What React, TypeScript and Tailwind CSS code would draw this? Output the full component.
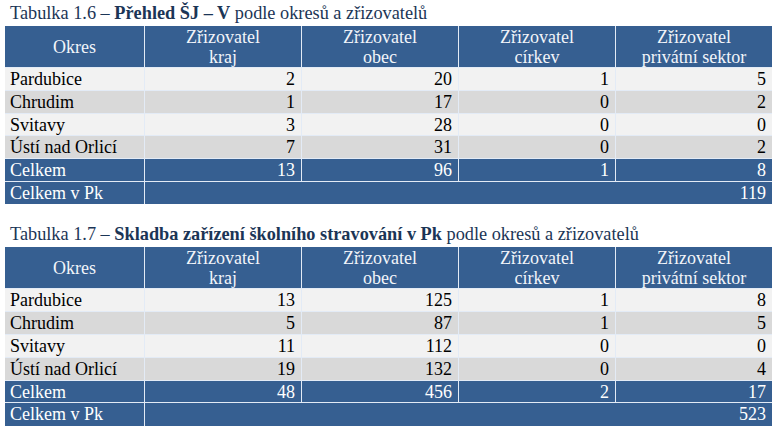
import React from "react";

type TRow = { okres: string; vals: number[] };

type TTableProps = {
  label: string;
  title: string;
  rows: TRow[];
  totals: number[];
  grand: number;
  className?: string;
};

const headers = [
  ["Zřizovatel", "kraj"],
  ["Zřizovatel", "obec"],
  ["Zřizovatel", "církev"],
  ["Zřizovatel", "privátní sektor"],
];

const Table = ({ label, title, rows, totals, grand, className }: TTableProps) => {
  return (
    <div className={className}>
      {/* TITLE */}
      <div className="h-[26px] leading-[26px] pl-[10px] text-[18.3px] text-[#1b3556] whitespace-nowrap">
        {label} – <span className="font-bold">{title}</span> podle okresů a zřizovatelů
      </div>

      {/* TABLE */}
      <div className="ml-[5px] w-[767px] grid grid-cols-[139px_156px_156px_156px_156px] gap-px bg-[#e3ebf6] text-[18px]">
        <div className="h-[41px] bg-[#365f91] text-[#f2f5fa] flex items-center justify-center leading-[20px]">
          Okres
        </div>
        {headers.map((h) => (
          <div
            key={h[1]}
            className="h-[41px] bg-[#365f91] text-[#f2f5fa] flex flex-col items-center justify-center leading-[20px]"
          >
            <span>{h[0]}</span>
            <span>{h[1]}</span>
          </div>
        ))}

        {rows.map((r, i) => {
          const bg = i % 2 === 0 ? "bg-[#f2f2f2]" : "bg-[#d9d9d9]";
          return (
            <React.Fragment key={r.okres}>
              <div className={`h-[21.8px] leading-[22px] pl-[5px] text-black ${bg}`}>
                {r.okres}
              </div>
              {r.vals.map((v, j) => (
                <div
                  key={j}
                  className={`h-[21.8px] leading-[22px] pr-[6px] text-right text-black ${bg}`}
                >
                  {v}
                </div>
              ))}
            </React.Fragment>
          );
        })}

        <div className="h-[21.8px] leading-[22px] pl-[5px] bg-[#365f91] text-white">
          Celkem
        </div>
        {totals.map((v, j) => (
          <div
            key={j}
            className="h-[21.8px] leading-[22px] pr-[6px] text-right bg-[#365f91] text-white"
          >
            {v}
          </div>
        ))}

        <div className="h-[22.5px] leading-[22px] pl-[5px] bg-[#365f91] text-white">
          Celkem v Pk
        </div>
        <div className="col-span-4 h-[22.5px] leading-[22px] pr-[6px] text-right bg-[#365f91] text-white">
          {grand}
        </div>
      </div>
    </div>
  );
};

export default function App() {
  return (
    <div className="w-[779px] h-[431px] bg-white overflow-hidden font-['Liberation_Serif','Times_New_Roman',serif]">
      <Table
        label="Tabulka 1.6"
        title="Přehled ŠJ – V"
        rows={[
          { okres: "Pardubice", vals: [2, 20, 1, 5] },
          { okres: "Chrudim", vals: [1, 17, 0, 2] },
          { okres: "Svitavy", vals: [3, 28, 0, 0] },
          { okres: "Ústí nad Orlicí", vals: [7, 31, 0, 2] },
        ]}
        totals={[13, 96, 1, 8]}
        grand={119}
      />
      <Table
        className="mt-[17px]"
        label="Tabulka 1.7"
        title="Skladba zařízení školního stravování v Pk"
        rows={[
          { okres: "Pardubice", vals: [13, 125, 1, 8] },
          { okres: "Chrudim", vals: [5, 87, 1, 5] },
          { okres: "Svitavy", vals: [11, 112, 0, 0] },
          { okres: "Ústí nad Orlicí", vals: [19, 132, 0, 4] },
        ]}
        totals={[48, 456, 2, 17]}
        grand={523}
      />
    </div>
  );
}
